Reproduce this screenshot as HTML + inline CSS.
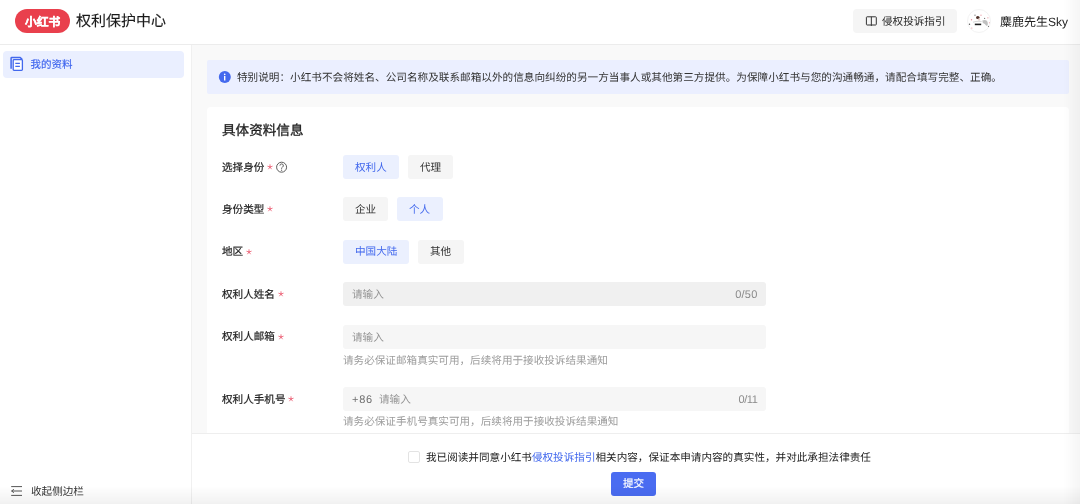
<!DOCTYPE html>
<html lang="zh-CN"><head><meta charset="utf-8">
<style>
*{box-sizing:border-box;margin:0;padding:0}
html,body{width:1080px;height:504px;overflow:hidden;background:#fff}
#root{position:absolute;left:0;top:0;width:1080px;height:504px;will-change:transform}
body{font-family:"Liberation Sans",sans-serif;color:#333;position:relative;font-size:10.6px;text-rendering:geometricPrecision}
.a{position:absolute}
.t{position:absolute;white-space:nowrap;line-height:14px}
.lbl{color:#1f1f1f;-webkit-text-stroke:0.2px #1f1f1f}
.st{position:relative;margin-left:2.9px;top:-0.7px;vertical-align:middle}
.btn{position:absolute;height:24px;border-radius:3px;background:#f5f5f5}
.btn.on{background:#ebf0fe}
.bt{position:absolute;white-space:nowrap;line-height:14px;color:#333}
.bt.on{color:#4268ed}
.inp{position:absolute;left:343px;width:423px;height:24px;border-radius:3px;background:#f6f6f6}
.ph{color:#949494}
.help{color:#9c9c9c}
</style></head><body><div id="root">
<!-- header -->
<div class="a" style="left:0;top:0;width:1080px;height:44px;background:#fff"></div>
<div class="a" style="left:0;top:44px;width:1080px;height:1px;background:#ececec"></div>
<div class="a" style="left:15px;top:9px;width:55px;height:24px;border-radius:12px;background:#e9404d"></div>
<div class="t" style="left:25px;top:14.8px;font-size:11.8px;font-weight:bold;color:#fff;line-height:14px;-webkit-text-stroke:0.3px #fff">小红书</div>
<div class="t" style="left:76px;top:12.5px;font-size:15px;color:#1a1a1a;line-height:18px;-webkit-text-stroke:0.12px #1a1a1a">权利保护中心</div>
<div class="a" style="left:853px;top:9px;width:104px;height:24px;border-radius:4px;background:#f5f5f5"></div>
<svg class="a" style="left:864px;top:14px" width="14" height="14" viewBox="864 14 14 14"><rect x="866.4" y="16.8" width="9.9" height="8.2" rx="0.7" fill="none" stroke="#333" stroke-width="1"/><path d="M871.35 16.8v9.1" stroke="#333" stroke-width="1"/></svg>
<div class="t" style="left:882px;top:15px;color:#2a2a2a">侵权投诉指引</div>
<div class="a" style="left:967px;top:9px;width:24px;height:24px;border-radius:50%;background:#fff;border:1px solid #f3f3f3"></div>
<svg class="a" style="left:967px;top:9px" width="24" height="24" viewBox="0 0 24 24">
<ellipse cx="10.8" cy="8.5" rx="1.8" ry="1.6" fill="#4f3129"/>
<ellipse cx="12" cy="10.6" rx="1.3" ry="1.1" fill="#ecd6cf"/>
<path d="M6 13.3q4-1.6 8.6-.8" stroke="#d8d8d8" stroke-width="1.2" fill="none"/>
<path d="M7.8 14.6h6.4v1.6H7.8z" fill="#1f1f1f"/>
<path d="M15.3 11.6q2.6-1.4 4.8.4q1.2 2 .6 4.4l-1.4.4q-1.2-2.2-3.4-2.8z" fill="#aaa" opacity=".75"/>
<circle cx="4.5" cy="10.7" r=".7" fill="#e68f9b"/>
<circle cx="14" cy="6.2" r=".6" fill="#e68f9b"/>
<circle cx="20.9" cy="8.8" r=".6" fill="#e68f9b"/>
<circle cx="22.4" cy="13.7" r=".5" fill="#e68f9b"/>
<circle cx="4.8" cy="19" r=".6" fill="#e68f9b"/>
<circle cx="8" cy="6.2" r=".6" fill="#666"/>
<circle cx="2.5" cy="15.3" r=".7" fill="#555"/>
<circle cx="17.6" cy="9.4" r=".6" fill="#777"/>
<circle cx="21.5" cy="17.3" r=".6" fill="#666"/>
</svg>
<div class="t" style="left:1000px;top:14.5px;font-size:12px;color:#222;line-height:14px">麋鹿先生Sky</div>

<!-- sidebar -->
<div class="a" style="left:191px;top:45px;width:1px;height:459px;background:#f0f0f0"></div>
<div class="a" style="left:3px;top:51px;width:181.3px;height:27px;border-radius:4px;background:#eaefff"></div>
<svg class="a" style="left:8px;top:54px" width="18" height="20" viewBox="8 54 18 20"><path d="M11.1 68.8V58.2q0-.7.7-.7h8.4l1.9 1.9" fill="none" stroke="#4268ed" stroke-width="1.5" stroke-linejoin="round"/><rect x="13.2" y="59.7" width="9.2" height="10.6" rx="0.8" fill="#fff" stroke="#4268ed" stroke-width="1.3"/><path d="M15.3 63.4h4.6M15.3 66.3h4.6" stroke="#4268ed" stroke-width="1.2"/></svg>
<div class="t" style="left:30.5px;top:57.5px;color:#3e64ee;font-size:10.5px;-webkit-text-stroke:0.15px #3e64ee">我的资料</div>
<svg class="a" style="left:9px;top:484px" width="16" height="14" viewBox="9 484 16 14"><path d="M11.2 486.6h10.8M11.6 491h10.4M11.2 495.4h10.8" stroke="#555" stroke-width="1"/><path d="M13.9 489.3L11.6 491L13.9 492.7" fill="none" stroke="#555" stroke-width="1"/></svg>
<div class="t" style="left:31px;top:484.5px;color:#333">收起侧边栏</div>

<!-- main -->
<div class="a" style="left:192px;top:45px;width:888px;height:388px;background:#f9f9f9"></div>
<div class="a" style="left:206.5px;top:60px;width:862.3px;height:34.2px;background:#ebefff;border-radius:2px"></div>
<svg class="a" style="left:218px;top:70px" width="14" height="14" viewBox="218 70 14 14"><circle cx="224.8" cy="77.1" r="6" fill="#4469ee"/><circle cx="224.7" cy="74.4" r="0.8" fill="#fff"/><path d="M224.7 75.9v4.7" stroke="#fff" stroke-width="1.4"/></svg>
<div class="t" style="left:237px;top:70.7px;color:#333;font-size:10.63px">特别说明：小红书不会将姓名、公司名称及联系邮箱以外的信息向纠纷的另一方当事人或其他第三方提供。为保障小红书与您的沟通畅通，请配合填写完整、正确。</div>

<div class="a" style="left:206.5px;top:106.5px;width:862.3px;height:340px;background:#fff;border-radius:4px"></div>
<div class="t" style="left:222px;top:122.4px;font-size:13.6px;color:#1f1f1f;line-height:18px;-webkit-text-stroke:0.32px #1f1f1f">具体资料信息</div>

<div class="t lbl" style="left:222px;top:160.5px">选择身份<svg class="st" width="6" height="6" viewBox="-3 -3 6 6"><path d="M0 0V-2.3M0 0L2.19-0.71M0 0L1.35 1.86M0 0L-1.35 1.86M0 0L-2.19-0.71" stroke="#ec6478" stroke-width="0.85" stroke-linecap="round"/></svg></div>
<svg class="a" style="left:275px;top:161px" width="13" height="13" viewBox="275 161 13 13"><circle cx="281.6" cy="167.2" r="5" fill="none" stroke="#555" stroke-width="0.95"/><path d="M279.95 165.6a1.7 1.7 0 1 1 2.5 1.5q-.85.45-.85 1.35v.5" fill="none" stroke="#555" stroke-width="0.95"/><circle cx="281.6" cy="170.2" r="0.6" fill="#555"/></svg>
<div class="btn on" style="left:343px;top:155px;width:56px"></div>
<div class="bt on" style="left:355px;top:160.5px">权利人</div>
<div class="btn" style="left:408px;top:155px;width:45px"></div>
<div class="bt" style="left:420px;top:160.5px">代理</div>

<div class="t lbl" style="left:222px;top:202.5px">身份类型<svg class="st" width="6" height="6" viewBox="-3 -3 6 6"><path d="M0 0V-2.3M0 0L2.19-0.71M0 0L1.35 1.86M0 0L-1.35 1.86M0 0L-2.19-0.71" stroke="#ec6478" stroke-width="0.85" stroke-linecap="round"/></svg></div>
<div class="btn" style="left:343px;top:197px;width:45px"></div>
<div class="bt" style="left:355px;top:202.5px">企业</div>
<div class="btn on" style="left:397px;top:197px;width:46px"></div>
<div class="bt on" style="left:409px;top:202.5px">个人</div>

<div class="t lbl" style="left:222px;top:245px">地区<svg class="st" width="6" height="6" viewBox="-3 -3 6 6"><path d="M0 0V-2.3M0 0L2.19-0.71M0 0L1.35 1.86M0 0L-1.35 1.86M0 0L-2.19-0.71" stroke="#ec6478" stroke-width="0.85" stroke-linecap="round"/></svg></div>
<div class="btn on" style="left:343px;top:240px;width:66px"></div>
<div class="bt on" style="left:355px;top:245px">中国大陆</div>
<div class="btn" style="left:418px;top:240px;width:46px"></div>
<div class="bt" style="left:430px;top:245px">其他</div>

<div class="t lbl" style="left:222px;top:287.5px">权利人姓名<svg class="st" width="6" height="6" viewBox="-3 -3 6 6"><path d="M0 0V-2.3M0 0L2.19-0.71M0 0L1.35 1.86M0 0L-1.35 1.86M0 0L-2.19-0.71" stroke="#ec6478" stroke-width="0.85" stroke-linecap="round"/></svg></div>
<div class="inp" style="top:282px;background:#f0f0f0"></div>
<div class="t ph" style="left:352px;top:288.2px">请输入</div>
<div class="t ph" style="right:322.5px;top:287.5px;color:#8a8a8a;font-size:11px;letter-spacing:0.2px">0/50</div>

<div class="t lbl" style="left:222px;top:330px">权利人邮箱<svg class="st" width="6" height="6" viewBox="-3 -3 6 6"><path d="M0 0V-2.3M0 0L2.19-0.71M0 0L1.35 1.86M0 0L-1.35 1.86M0 0L-2.19-0.71" stroke="#ec6478" stroke-width="0.85" stroke-linecap="round"/></svg></div>
<div class="inp" style="top:325px"></div>
<div class="t ph" style="left:352px;top:330.7px">请输入</div>
<div class="t help" style="left:343px;top:354px">请务必保证邮箱真实可用，后续将用于接收投诉结果通知</div>

<div class="t lbl" style="left:222px;top:392.5px">权利人手机号<svg class="st" width="6" height="6" viewBox="-3 -3 6 6"><path d="M0 0V-2.3M0 0L2.19-0.71M0 0L1.35 1.86M0 0L-1.35 1.86M0 0L-2.19-0.71" stroke="#ec6478" stroke-width="0.85" stroke-linecap="round"/></svg></div>
<div class="inp" style="top:387px"></div>
<div class="t ph" style="left:352px;top:392.7px;color:#707070;font-size:11px;letter-spacing:0.75px">+86</div>
<div class="t ph" style="left:379px;top:393.2px">请输入</div>
<div class="t ph" style="right:322.5px;top:392.5px;color:#8a8a8a;font-size:11px;letter-spacing:-0.4px">0/11</div>
<div class="t help" style="left:343px;top:415px">请务必保证手机号真实可用，后续将用于接收投诉结果通知</div>

<!-- footer -->
<div class="a" style="left:192px;top:433px;width:888px;height:1px;background:#eeeeee"></div>
<div class="a" style="left:407.5px;top:451px;width:12.2px;height:12px;border:1px solid #e3e3e3;border-radius:2px;background:#fff"></div>
<div class="t" style="left:426px;top:450.5px;color:#222">我已阅读并同意小红书<span style="color:#4268ed">侵权投诉指引</span>相关内容，保证本申请内容的真实性，并对此承担法律责任</div>
<div class="a" style="left:610.5px;top:471.5px;width:45.3px;height:24px;border-radius:3px;background:#4a6cf1"></div>
<div class="t" style="left:623px;top:477px;color:#fff;-webkit-text-stroke:0.15px #fff">提交</div>

<div class="a" style="left:1063px;top:0;width:17px;height:504px;background:linear-gradient(to right,rgba(0,0,0,0),rgba(0,0,0,0.035))"></div>
<div class="a" style="left:0;top:486px;width:1080px;height:18px;background:linear-gradient(to bottom,rgba(0,0,0,0),rgba(0,0,0,0.055))"></div>
</div></body></html>
